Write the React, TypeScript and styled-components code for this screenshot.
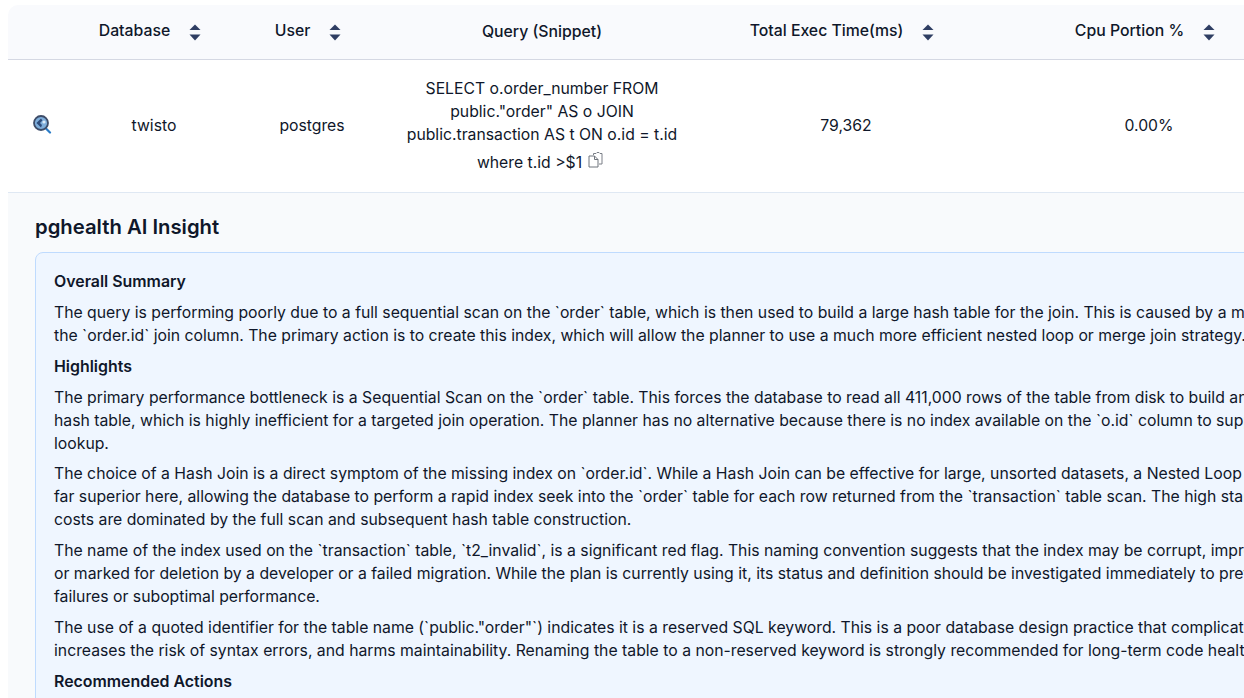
import React from 'react'
import styled, { createGlobalStyle } from 'styled-components'

const GlobalStyle = createGlobalStyle`
  html, body {
    margin: 0;
    padding: 0;
    background: #fff;
    overflow: hidden;
  }
  body {
    font-family: Inter, 'Liberation Sans', sans-serif;
    color: #0f172a;
  }
`

const columns = '68px 156px 160px 300px 308px 298px 110px'

const Page = styled.div`
  height: 698px;
  overflow: hidden;
  padding: 5px 0 0 8px;
  box-sizing: border-box;
`

const Sheet = styled.div`
  width: 1400px;
`

const HeaderRow = styled.div`
  display: grid;
  grid-template-columns: ${columns};
  height: 54px;
  background: #f9fafd;
  border-bottom: 1px solid #d5d8e3;
  border-top-left-radius: 10px;
`

const HeaderCell = styled.div`
  display: flex;
  align-items: center;
  justify-content: center;
  font-size: 15.8px;
  font-weight: 500;
  line-height: 23px;
  color: #0f172a;
  padding-bottom: 2px;
`

const HeaderLabel = styled.span<{ $raised: boolean }>`
  margin-bottom: ${(p) => (p.$raised ? '2px' : '0')};
`

const SortBox = styled.span`
  display: inline-flex;
  margin: 2px 8px 0 19px;
`

const DataRow = styled.div`
  display: grid;
  grid-template-columns: ${columns};
  height: 132px;
  background: #fff;
  border-bottom: 1px solid #dfe8f3;
  align-items: center;
`

const DataCell = styled.div`
  display: flex;
  justify-content: center;
  font-size: 15.75px;
  line-height: 23px;
  text-align: center;
  margin-bottom: 2px;
`

const QueryText = styled.div`
  width: 290px;
`

const CopyIcon = styled.svg`
  display: inline-block;
  vertical-align: 0;
  margin: 6px 4px 0 6px;
`

const InspectSvg = styled.svg`
  margin-bottom: 2px;
`

const InsightPanel = styled.section`
  background: #f8fafc;
  padding: 20px 0 40px 27px;
`

const InsightTitle = styled.h2`
  margin: 0 0 11px;
  font-size: 20.3px;
  line-height: 28px;
  font-weight: 600;
  color: #0f172a;
`

const InsightCard = styled.div`
  background: #eff6ff;
  border: 1px solid #bfdbfe;
  border-radius: 8px;
  padding: 17.8px 18px 40px;
  width: 1306px;
`

const SectionHeading = styled.h3`
  margin: 0 0 8px;
  font-size: 15.9px;
  line-height: 22.96px;
  font-weight: 600;
  color: #0f172a;
`

const Paragraph = styled.p`
  margin: 0 0 8px;
  font-size: 15.78px;
  line-height: 22.96px;
  color: #0f172a;
`

const SortIcon = () => (
  <svg width="12" height="17" viewBox="0 0 12 17" aria-hidden="true">
    <path d="M6 .5 11.500 6H.5z" fill="#2f3e63" />
    <path d="M.5 10.500h11L6 16.500z" fill="#2f3e63" />
  </svg>
)

const InspectIcon = () => (
  <InspectSvg width="19" height="19" viewBox="0 0 19 19" aria-hidden="true">
    <path d="m12 12.500 5 5" stroke="#2a7cc7" strokeWidth="2.200" strokeLinecap="round" />
    <circle cx="8" cy="8" r="7" fill="#7eaedb" stroke="#3d4c68" strokeWidth="1.800" />
    <path d="M8 3.400 3.400 8 8 12.400l1-2.400-2-2 2.400-2.600z" fill="#2f4d7c" />
    <circle cx="11" cy="7" r="1.600" fill="#dcecf9" />
  </InspectSvg>
)

const ClipboardIcon = () => (
  <CopyIcon width="15" height="16" viewBox="0 0 15 16" fill="none" aria-hidden="true">
    <path d="M5.500 3V1.500h2.500l1-1h2l1 1h2v10.500h-3" stroke="#7a7f87" strokeWidth="1" />
    <path d="M1 4h5.500l3.500 3.500V15H1z" fill="#fff" stroke="#6f747c" strokeWidth="1" />
    <path d="M6.500 4v3.500H10" stroke="#6f747c" strokeWidth="1" />
  </CopyIcon>
)

const headers = [
  { label: '', sortable: false },
  { label: 'Database', sortable: true },
  { label: 'User', sortable: true },
  { label: 'Query (Snippet)', sortable: false },
  { label: 'Total Exec Time(ms)', sortable: true },
  { label: 'Cpu Portion %', sortable: true },
  { label: '', sortable: false },
]

const App: React.FC = () => {
  return (
    <Page>
      <GlobalStyle />
      <Sheet>
        <HeaderRow>
          {headers.map((h, i) => (
            <HeaderCell key={i}>
              <HeaderLabel $raised={h.sortable}>{h.label}</HeaderLabel>
              {h.sortable && (
                <SortBox>
                  <SortIcon />
                </SortBox>
              )}
            </HeaderCell>
          ))}
        </HeaderRow>
        <DataRow>
          <DataCell>
            <InspectIcon />
          </DataCell>
          <DataCell>twisto</DataCell>
          <DataCell>postgres</DataCell>
          <DataCell>
            <QueryText>
              SELECT o.order_number FROM public."order" AS o JOIN public.transaction AS t ON o.id = t.id where t.id &gt;$1
              <ClipboardIcon />
            </QueryText>
          </DataCell>
          <DataCell>79,362</DataCell>
          <DataCell>0.00%</DataCell>
          <DataCell />
        </DataRow>
        <InsightPanel>
          <InsightTitle>pghealth AI Insight</InsightTitle>
          <InsightCard>
            <SectionHeading>Overall Summary</SectionHeading>
            <Paragraph>
              The query is performing poorly due to a full sequential scan on the `order` table, which is then used to build a large hash table for the join. This is caused by a missing index on the `order.id` join column. The primary action is to create this index, which will allow the planner to use a much more efficient nested loop or merge join strategy.
            </Paragraph>
            <SectionHeading>Highlights</SectionHeading>
            <Paragraph>
              The primary performance bottleneck is a Sequential Scan on the `order` table. This forces the database to read all 411,000 rows of the table from disk to build an in-memory hash table, which is highly inefficient for a targeted join operation. The planner has no alternative because there is no index available on the `o.id` column to support a direct lookup.
            </Paragraph>
            <Paragraph>
              The choice of a Hash Join is a direct symptom of the missing index on `order.id`. While a Hash Join can be effective for large, unsorted datasets, a Nested Loop Join would be far superior here, allowing the database to perform a rapid index seek into the `order` table for each row returned from the `transaction` table scan. The high startup and total costs are dominated by the full scan and subsequent hash table construction.
            </Paragraph>
            <Paragraph>
              The name of the index used on the `transaction` table, `t2_invalid`, is a significant red flag. This naming convention suggests that the index may be corrupt, improperly created, or marked for deletion by a developer or a failed migration. While the plan is currently using it, its status and definition should be investigated immediately to prevent future failures or suboptimal performance.
            </Paragraph>
            <Paragraph>
              The use of a quoted identifier for the table name (`public."order"`) indicates it is a reserved SQL keyword. This is a poor database design practice that complicates queries, increases the risk of syntax errors, and harms maintainability. Renaming the table to a non-reserved keyword is strongly recommended for long-term code health.
            </Paragraph>
            <SectionHeading>Recommended Actions</SectionHeading>
          </InsightCard>
        </InsightPanel>
      </Sheet>
    </Page>
  )
}

export default App
